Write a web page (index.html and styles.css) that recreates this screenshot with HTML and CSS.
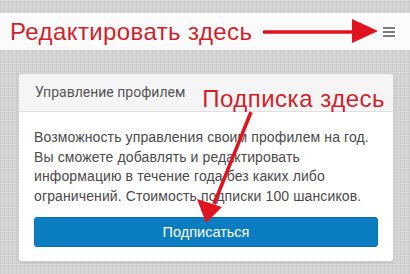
FILE: index.html
```html
<!DOCTYPE html>
<html>
<head>
<meta charset="utf-8">
<link rel="stylesheet" href="styles.css">
</head>
<body>
<div class="page">
  <header class="topbar">
    <span class="note note-top">Редактировать здесь</span>
    <span class="menu" aria-label="menu">
      <svg width="12" height="10" viewBox="0 0 12 10"><rect x="0" y="0" width="12" height="2" fill="#7a7f84"/><rect x="0" y="4" width="12" height="2" fill="#7a7f84"/><rect x="0" y="8" width="12" height="2" fill="#7a7f84"/></svg>
    </span>
  </header>
  <section class="card">
    <div class="card-head">
      <span class="card-title">Управление профилем</span>
      <span class="note note-card">Подписка здесь</span>
    </div>
    <div class="card-body">
      <p class="desc">Возможность управления своим профилем на год. Вы сможете добавлять и редактировать информацию в течение года без каких либо ограничений. Стоимость подписки 100 шансиков.</p>
      <button class="btn">Подписаться</button>
    </div>
  </section>
  <svg class="arrows" width="410" height="274" viewBox="0 0 410 274">
    <line x1="263" y1="32" x2="356" y2="32" stroke="#e0131f" stroke-width="3.5"/>
    <polygon points="352,19 378,31 352,43" fill="#e0131f"/>
    <line x1="251" y1="112" x2="214" y2="204" stroke="#e0131f" stroke-width="3.5"/>
    <polygon points="197,199 222,207 206,223" fill="#e0131f"/>
  </svg>
</div>
</body>
</html>
```
FILE: styles.css
```css
html, body {
  margin: 0;
  padding: 0;
}
body {
  width: 410px;
  height: 274px;
  overflow: hidden;
  background-color: #d3d3d3;
  background-image:
    repeating-linear-gradient(0deg, rgba(255,255,255,0.12) 0 1px, transparent 1px 3px),
    repeating-linear-gradient(90deg, rgba(0,0,0,0.04) 0 1px, transparent 1px 4px);
  font-family: "Liberation Sans", Arial, sans-serif;
}
.page {
  position: relative;
  width: 410px;
  height: 274px;
  padding-top: 13px;
  box-sizing: border-box;
}
.topbar {
  height: 37px;
  background: #fbfbfb;
  display: flex;
  align-items: center;
  justify-content: space-between;
  padding: 0 15px 0 10px;
}
.note {
  color: #d21f2b;
  font-family: "Liberation Sans", Arial, sans-serif;
  line-height: 1;
}
.note-top {
  font-size: 24px;
  letter-spacing: 0.4px;
  margin-top: 1px;
}
.menu {
  display: flex;
  align-items: center;
}
.card {
  margin: 23px 16px 0 18px;
  background: #fff;
  border: 1px solid #d0d0d0;
  border-radius: 4px;
  box-shadow: 0 1px 2px rgba(0,0,0,0.08);
  overflow: hidden;
}
.card-head {
  height: 37px;
  background: #f5f5f5;
  border-bottom: 1px solid #e0e0e0;
  display: flex;
  align-items: center;
  justify-content: space-between;
  padding: 0 8px 0 16px;
}
.card-title {
  font-family: Roboto, "Liberation Sans", sans-serif;
  font-size: 14px;
  color: #555;
  margin-top: -1px;
}
.note-card {
  font-size: 24px;
  letter-spacing: 0.5px;
  margin-top: 12px;
}
.card-body {
  padding: 16px 15px 14px 15px;
}
.desc {
  margin: 0;
  font-size: 14px;
  letter-spacing: 0.12px;
  line-height: 19.5px;
  color: #4a4a4a;
}
.btn {
  display: block;
  width: 100%;
  height: 30px;
  margin-top: 11px;
  border: 1px solid #0a6fae;
  border-radius: 3px;
  background: #0b7dc1;
  color: #fff;
  font-family: "Liberation Sans", Arial, sans-serif;
  font-size: 14.5px;
}
.arrows {
  position: absolute;
  left: 0;
  top: 0;
  pointer-events: none;
}
```
